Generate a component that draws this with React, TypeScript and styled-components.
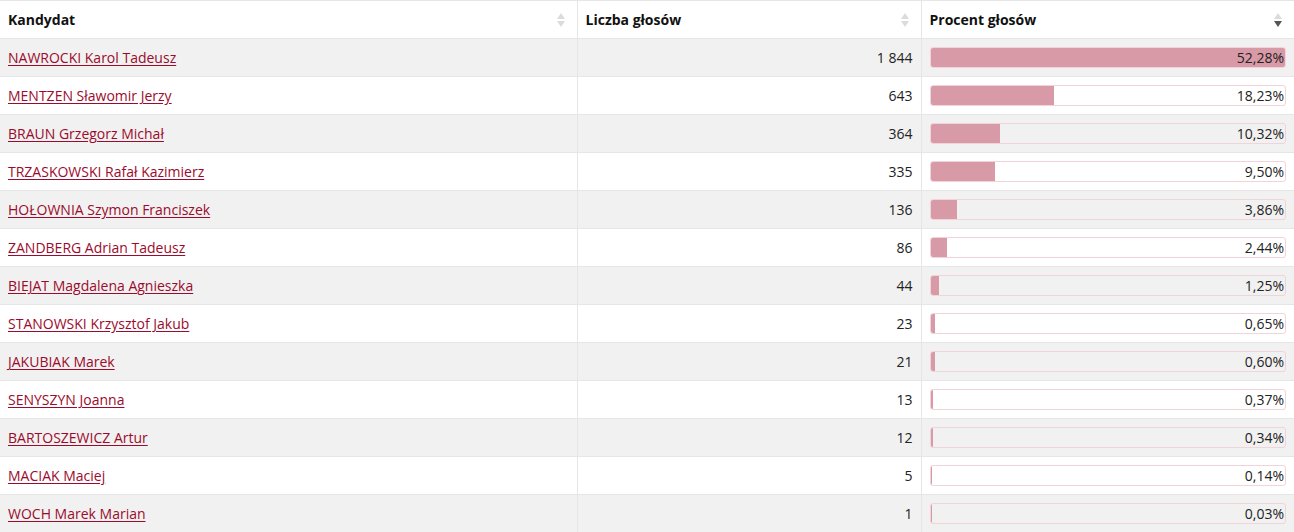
import styled, { createGlobalStyle } from 'styled-components';

const GlobalStyle = createGlobalStyle`
	html, body {
		margin: 0;
		padding: 0;
		background: #fff;
	}
	body {
		font-family: 'Open Sans', 'Liberation Sans', sans-serif;
		font-size: 14px;
		color: #222;
	}
`;

interface Candidate {
	name: string;
	votes: string;
	percent: number;
}

const candidates: Candidate[] = [
	{ name: 'NAWROCKI Karol Tadeusz', votes: '1 844', percent: 52.28 },
	{ name: 'MENTZEN Sławomir Jerzy', votes: '643', percent: 18.23 },
	{ name: 'BRAUN Grzegorz Michał', votes: '364', percent: 10.32 },
	{ name: 'TRZASKOWSKI Rafał Kazimierz', votes: '335', percent: 9.5 },
	{ name: 'HOŁOWNIA Szymon Franciszek', votes: '136', percent: 3.86 },
	{ name: 'ZANDBERG Adrian Tadeusz', votes: '86', percent: 2.44 },
	{ name: 'BIEJAT Magdalena Agnieszka', votes: '44', percent: 1.25 },
	{ name: 'STANOWSKI Krzysztof Jakub', votes: '23', percent: 0.65 },
	{ name: 'JAKUBIAK Marek', votes: '21', percent: 0.6 },
	{ name: 'SENYSZYN Joanna', votes: '13', percent: 0.37 },
	{ name: 'BARTOSZEWICZ Artur', votes: '12', percent: 0.34 },
	{ name: 'MACIAK Maciej', votes: '5', percent: 0.14 },
	{ name: 'WOCH Marek Marian', votes: '1', percent: 0.03 },
];

const Table = styled.table`
	width: 100%;
	border-collapse: collapse;
	table-layout: fixed;
	border-top: 1px solid #e6e6e6;
`;

const HeadCell = styled.th<{ $width?: number }>`
	position: relative;
	width: ${(p) => (p.$width ? `${p.$width}px` : 'auto')};
	height: 38px;
	padding: 0 26px 0 8px;
	text-align: left;
	font-weight: 700;
	font-size: 14px;
	color: #111;
	border-bottom: 1px solid #e6e6e6;
	border-right: 1px solid #e6e6e6;
	box-sizing: border-box;
	&:last-child {
		border-right: none;
	}
`;

const SortIcon = styled.span`
	position: absolute;
	right: 12px;
	top: 12px;
	display: flex;
	flex-direction: column;
	gap: 2px;
`;

const Arrow = styled.span<{ $dir: 'up' | 'down'; $active?: boolean }>`
	width: 0;
	height: 0;
	border-left: 4px solid transparent;
	border-right: 4px solid transparent;
	${(p) =>
		p.$dir === 'up'
			? `border-bottom: 6px solid ${p.$active ? '#555' : '#dcdcdc'};`
			: `border-top: 6px solid ${p.$active ? '#555' : '#dcdcdc'};`}
`;

const Row = styled.tr`
	&:nth-child(odd) {
		background: #f1f1f1;
	}
	&:nth-child(even) {
		background: #fff;
	}
`;

const Cell = styled.td<{ $align?: 'left' | 'right' }>`
	height: 37px;
	padding: 0 8px;
	text-align: ${(p) => p.$align ?? 'left'};
	border-bottom: 1px solid #e6e6e6;
	border-right: 1px solid #e6e6e6;
	color: #222;
	&:last-child {
		border-right: none;
	}
`;

const NameLink = styled.a`
	color: #9c0a2c;
	text-decoration: underline;
	text-underline-offset: 2px;
`;

const Bar = styled.div`
	position: relative;
	height: 21px;
	border: 1px solid #f1d3da;
	border-radius: 3px;
	box-sizing: border-box;
	overflow: hidden;
`;

const BarFill = styled.div`
	position: absolute;
	left: 0;
	top: 0;
	bottom: 0;
	background: #d99aa8;
`;

const BarLabel = styled.span`
	position: relative;
	display: block;
	text-align: right;
	padding-right: 1px;
	line-height: 19px;
	color: #222;
`;

const SortArrows = ({ active }: { active?: 'up' | 'down' }) => (
	<SortIcon>
		<Arrow $dir="up" $active={active === 'up'} />
		<Arrow $dir="down" $active={active === 'down'} />
	</SortIcon>
);

const formatPercent = (v: number) => v.toFixed(2).replace('.', ',') + '%';

export default function App() {
	const max = Math.max(...candidates.map((c) => c.percent));
	return (
		<>
			<GlobalStyle />
			<Table>
				<thead>
					<tr>
						<HeadCell $width={577}>
							Kandydat
							<SortArrows />
						</HeadCell>
						<HeadCell $width={344}>
							Liczba głosów
							<SortArrows />
						</HeadCell>
						<HeadCell>
							Procent głosów
							<SortArrows active="down" />
						</HeadCell>
					</tr>
				</thead>
				<tbody>
					{candidates.map((c) => (
						<Row key={c.name}>
							<Cell>
								<NameLink href="#">{c.name}</NameLink>
							</Cell>
							<Cell $align="right">{c.votes}</Cell>
							<Cell>
								<Bar>
									<BarFill style={{ width: `${(c.percent / max) * 100}%` }} />
									<BarLabel>{formatPercent(c.percent)}</BarLabel>
								</Bar>
							</Cell>
						</Row>
					))}
				</tbody>
			</Table>
		</>
	);
}
